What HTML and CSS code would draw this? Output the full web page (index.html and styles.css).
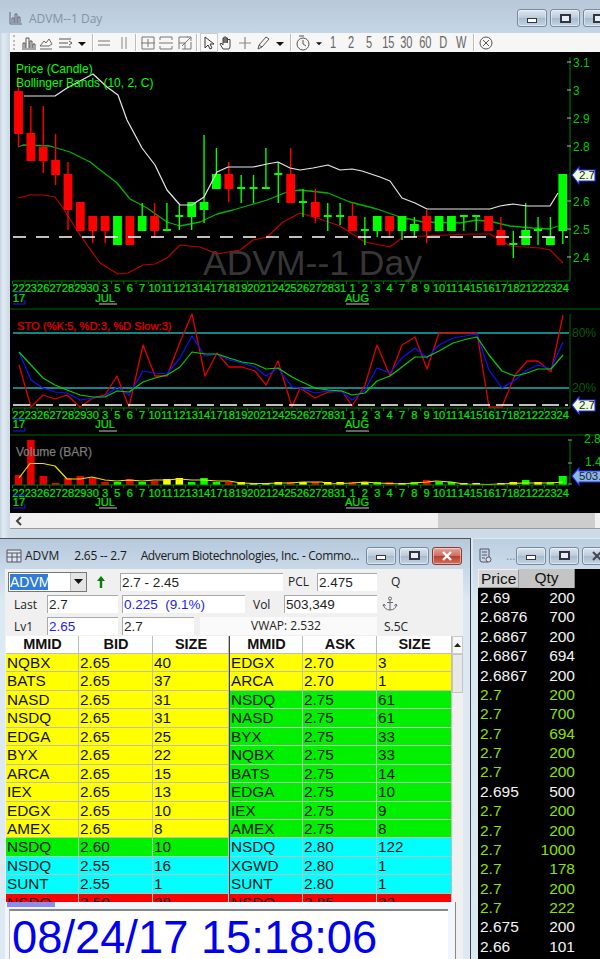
FILE: index.html
```html
<!DOCTYPE html>
<html lang="en">
<head>
<meta charset="utf-8">
<title>ADVM trading windows</title>
<link rel="stylesheet" href="styles.css">
</head>
<body>
<section class="win win-chart">
  <header class="titlebar chart-title">
    <svg class="title-icon" width="14" height="14" viewBox="0 0 14 14"><path d="M1 1v12h12M3 12V7h2v5M6 12V3h2v9M9 12V6h2v6" fill="none" stroke="#667" stroke-width="1"/></svg>
    <span class="dim">ADVM--1 Day</span>
    <div class="wbtns">
      <span class="wbtn"><i class="g-min"></i></span>
      <span class="wbtn"><i class="g-max"></i></span>
      <span class="wbtn"><i class="g-max"></i></span>
    </div>
  </header>
  <div class="toolbar">
    <span class="grip"></span>
    <svg class="tool" viewBox="0 0 18 18"><path d="M4 14V9h2v5M7 14V4h3v10M11 14V7h2v7M14 14v-4h2v4M3 15h14" fill="none" stroke="#555"/></svg>
    <svg class="tool" viewBox="0 0 18 18"><path d="M3 12l4-5 2 2 3-4 3 5-3 2H5zM3 15h12" fill="none" stroke="#666"/></svg>
    <svg class="tool" viewBox="0 0 18 18"><path d="M3 5h12M3 9h9M3 13h12M13 7l3 2-3 2" fill="none" stroke="#555"/></svg>
    <svg class="drop" viewBox="0 0 16 18"><path d="M4 8h8l-4 4z" fill="#111"/></svg>
    <span class="sep"></span>
    <svg class="tool" viewBox="0 0 18 18"><path d="M2 7h12M2 11h12" fill="none" stroke="#777" stroke-width="1.2"/></svg>
    <svg class="tool" viewBox="0 0 18 18"><path d="M7 3v12M11 3v12" fill="none" stroke="#999" stroke-width="1.2"/></svg>
    <span class="sep"></span>
    <svg class="tool" viewBox="0 0 18 18"><path d="M3 6V3h12v3M3 12v3h12v-3M2 9h14M9 5v8M3 6v6M15 6v6" fill="none" stroke="#777"/></svg>
    <svg class="tool" viewBox="0 0 18 18"><path d="M3 6V3h12v3M3 12v3h12v-3M2 9h14" fill="none" stroke="#777"/></svg>
    <svg class="tool" viewBox="0 0 18 18"><path d="M3 15V3h9M15 8v7H6M6 12l9-9M11 3h4v4M3 9h6v6" fill="none" stroke="#777"/></svg>
    <span class="sep"></span>
    <span class="tool-on"><svg width="14" height="18" viewBox="0 0 14 18"><path d="M3 3v11l3-3 2 4 2-1-2-4h4z" fill="#fff" stroke="#333"/></svg></span>
    <svg class="tool" viewBox="0 0 18 18"><path d="M6 15l-3-5 1-1 2 2V4h1v5-6h2v6-5h1.500v5-3.500H13V13l-1 2z" fill="none" stroke="#444"/></svg>
    <svg class="tool" viewBox="0 0 18 18"><path d="M9 3v12M3 9h12" fill="none" stroke="#888" stroke-width="1.200"/></svg>
    <svg class="tool" viewBox="0 0 18 18"><path d="M4 15l1-4 7-8 3 2-7 8zM5 11l3 2" fill="none" stroke="#555"/></svg>
    <svg class="drop" viewBox="0 0 16 18"><path d="M4 8h8l-4 4z" fill="#111"/></svg>
    <span class="sep"></span>
    <svg class="tool" viewBox="0 0 18 18"><circle cx="9" cy="10" r="6" fill="none" stroke="#555"/><path d="M9 6v4l3 2M5 2h5" fill="none" stroke="#555"/></svg>
    <svg class="drop drop-b" viewBox="0 0 16 18"><path d="M4 8h8l-4 4z" fill="#111"/></svg>
    <span class="per">1</span><span class="per">2</span><span class="per">5</span><span class="per">15</span><span class="per">30</span><span class="per">60</span><span class="per">D</span><span class="per">W</span>
    <span class="sep"></span>
    <svg class="tool" viewBox="0 0 18 18"><circle cx="9" cy="9" r="6" fill="none" stroke="#555"/><path d="M6 6l6 6M12 6l-6 6" fill="none" stroke="#555"/></svg>
  </div>
  <div id="chart" class="chart"></div>
  <div class="hscroll">
    <svg class="chev" width="8" height="10" viewBox="0 0 8 10"><path d="M6 1L2 5l4 4" fill="none" stroke="#444" stroke-width="2"/></svg>
    <span class="hthumb"></span>
  </div>
</section>

<section class="win win-book">
  <header class="titlebar book-title">
    <svg class="title-icon" width="16" height="14" viewBox="0 0 16 14"><path d="M1 1h14v12H1zM1 4h14M6 4v9M11 4v9M1 8h14" fill="#dfe6ee" stroke="#556"/></svg>
    <span class="t1">ADVM</span>
    <span class="t2">2.65 -- 2.7</span>
    <span class="t3">Adverum Biotechnologies, Inc. - Commo...</span>
    <div class="wbtns">
      <span class="wbtn"><i class="g-min"></i></span>
      <span class="wbtn"><i class="g-max"></i></span>
      <span class="wbtn close"><svg width="12" height="10" viewBox="0 0 12 10"><path d="M2 1l8 8M10 1L2 9" stroke="#fff" stroke-width="2.400"/></svg></span>
    </div>
  </header>
  <div class="client">
    <div class="form">
      <div class="form-row first">
        <div class="combo"><span class="combo-sel">ADVM</span><span class="combo-btn"><svg width="9" height="5" viewBox="0 0 9 5"><path d="M0 0h9L4.500 5z" fill="#111"/></svg></span></div>
        <svg class="up" width="12" height="14" viewBox="0 0 12 14"><path d="M6 1l4 5H7.200v7H4.800V6H2z" fill="#0a7a0a"/></svg>
        <span class="field f-range">2.7 - 2.45</span>
        <span class="lab l-pcl">PCL</span>
        <span class="field f-pcl">2.475</span>
        <span class="lab l-q">Q</span>
      </div>
      <div class="form-row">
        <span class="lab l-name">Last</span>
        <span class="field f-a">2.7</span>
        <span class="field f-chg blue">0.225&nbsp; (9.1%)</span>
        <span class="lab l-vol">Vol</span>
        <span class="field f-vol">503,349</span>
        <svg class="anchor" width="16" height="16" viewBox="0 0 16 16"><path d="M8 4v10M5 6.500h6M1.500 9c.5 3 3 5 6.500 5s6-2 6.500-5M1 10l1-2 1.500 2M12.500 10l1.500-2 1 2" fill="none" stroke="#667"/><circle cx="8" cy="2.500" r="1.500" fill="none" stroke="#667"/></svg>
      </div>
      <div class="form-row">
        <span class="lab l-name">Lv1</span>
        <span class="field f-a blue">2.65</span>
        <span class="field f-b">2.7</span>
        <span class="vwap">VWAP: 2.532</span>
        <span class="lab l-s">S.5C</span>
      </div>
    </div>
    <div class="book">
      <div class="side">
        <div class="row head"><span>MMID</span><span>BID</span><span>SIZE</span></div>
        <div class="row y"><span>NQBX</span><span>2.65</span><span>40</span></div>
        <div class="row y"><span>BATS</span><span>2.65</span><span>37</span></div>
        <div class="row y"><span>NASD</span><span>2.65</span><span>31</span></div>
        <div class="row y"><span>NSDQ</span><span>2.65</span><span>31</span></div>
        <div class="row y"><span>EDGA</span><span>2.65</span><span>25</span></div>
        <div class="row y"><span>BYX</span><span>2.65</span><span>22</span></div>
        <div class="row y"><span>ARCA</span><span>2.65</span><span>15</span></div>
        <div class="row y"><span>IEX</span><span>2.65</span><span>13</span></div>
        <div class="row y"><span>EDGX</span><span>2.65</span><span>10</span></div>
        <div class="row y"><span>AMEX</span><span>2.65</span><span>8</span></div>
        <div class="row g"><span>NSDQ</span><span>2.60</span><span>10</span></div>
        <div class="row c"><span>NSDQ</span><span>2.55</span><span>16</span></div>
        <div class="row c"><span>SUNT</span><span>2.55</span><span>1</span></div>
        <div class="row r"><span>NSDQ</span><span>2.50</span><span>28</span></div>
      </div>
      <div class="side side-ask">
        <div class="row head"><span>MMID</span><span>ASK</span><span>SIZE</span></div>
        <div class="row y"><span>EDGX</span><span>2.70</span><span>3</span></div>
        <div class="row y"><span>ARCA</span><span>2.70</span><span>1</span></div>
        <div class="row g"><span>NSDQ</span><span>2.75</span><span>61</span></div>
        <div class="row g"><span>NASD</span><span>2.75</span><span>61</span></div>
        <div class="row g"><span>BYX</span><span>2.75</span><span>33</span></div>
        <div class="row g"><span>NQBX</span><span>2.75</span><span>33</span></div>
        <div class="row g"><span>BATS</span><span>2.75</span><span>14</span></div>
        <div class="row g"><span>EDGA</span><span>2.75</span><span>10</span></div>
        <div class="row g"><span>IEX</span><span>2.75</span><span>9</span></div>
        <div class="row g"><span>AMEX</span><span>2.75</span><span>8</span></div>
        <div class="row c"><span>NSDQ</span><span>2.80</span><span>122</span></div>
        <div class="row c"><span>XGWD</span><span>2.80</span><span>1</span></div>
        <div class="row c"><span>SUNT</span><span>2.80</span><span>1</span></div>
        <div class="row r"><span>NSDQ</span><span>2.85</span><span>33</span></div>
      </div>
      <div class="vscroll">
        <span class="vbtn"><svg width="7" height="4" viewBox="0 0 7 4"><path d="M3.500 0L7 4H0z" fill="#222"/></svg></span>
        <span class="vthumb"></span>
      </div>
    </div>
  </div>
  <div class="clock-panel">
    <span class="clock-tab"></span>
    <div class="clock">08/24/17 15:18:06</div>
  </div>
</section>

<section class="win win-tape">
  <header class="titlebar tape-title">
    <svg class="title-icon" width="16" height="16" viewBox="0 0 16 16"><path d="M3 1h9v10M3 1v11a2 2 0 0 0 2 2h6M5 4h5M5 7h5M5 10h3" fill="none" stroke="#556"/><circle cx="11.500" cy="11.500" r="2.500" fill="#dde" stroke="#556"/></svg>
    <span class="dots">...</span>
    <div class="wbtns">
      <span class="wbtn"><i class="g-min"></i></span>
      <span class="wbtn"><i class="g-max"></i></span>
      <span class="wbtn"><svg width="12" height="10" viewBox="0 0 12 10"><path d="M2 1l8 8M10 1L2 9" stroke="#445" stroke-width="2"/></svg></span>
    </div>
  </header>
  <div class="tape">
    <div class="tape-head"><span class="th-price">Price</span><span class="th-qty">Qty</span></div>
    <div class="tick w"><span>2.69</span><span>200</span></div>
    <div class="tick w"><span>2.6876</span><span>700</span></div>
    <div class="tick w"><span>2.6867</span><span>200</span></div>
    <div class="tick w"><span>2.6867</span><span>694</span></div>
    <div class="tick w"><span>2.6867</span><span>200</span></div>
    <div class="tick l"><span>2.7</span><span>200</span></div>
    <div class="tick l"><span>2.7</span><span>700</span></div>
    <div class="tick l"><span>2.7</span><span>694</span></div>
    <div class="tick l"><span>2.7</span><span>200</span></div>
    <div class="tick l"><span>2.7</span><span>200</span></div>
    <div class="tick w"><span>2.695</span><span>500</span></div>
    <div class="tick l"><span>2.7</span><span>200</span></div>
    <div class="tick l"><span>2.7</span><span>200</span></div>
    <div class="tick l"><span>2.7</span><span>1000</span></div>
    <div class="tick l"><span>2.7</span><span>178</span></div>
    <div class="tick l"><span>2.7</span><span>200</span></div>
    <div class="tick l"><span>2.7</span><span>222</span></div>
    <div class="tick w"><span>2.675</span><span>200</span></div>
    <div class="tick w"><span>2.66</span><span>101</span></div>
  </div>
</section>
<script src="chart.js"></script>
</body>
</html>
```
FILE: styles.css
```css
* { box-sizing: border-box; }
html, body { margin: 0; padding: 0; }
body {
  position: relative;
  width: 600px;
  height: 959px;
  overflow: hidden;
  background: #dbe7f1;
  font-family: "Liberation Sans", Arial, sans-serif;
}
.win { position: absolute; overflow: hidden; }
.win-chart {
  left: 0; top: 0; width: 600px; height: 538px;
  padding-left: 10px;
  background: linear-gradient(90deg, #c3d3e2 0, #e2ebf3 3px, #cddbe8 9px);
}
.win-book {
  left: 0; top: 538px; width: 471px; height: 421px;
  background: linear-gradient(180deg, #b6c9dc 0, #c9d9e9 31px, #dce8f2 60px);
  border-right: 1px solid #3b4650;
  border-top: 1px solid #555;
}
.win-tape {
  left: 473px; top: 539px; width: 127px; height: 420px;
  background: linear-gradient(180deg, #bccfe1 0, #cbdbea 31px, #dce8f2 60px);
}
.titlebar {
  display: flex;
  align-items: center;
  font-family: "Open Sans", "Noto Sans", sans-serif;
  font-size: 12px;
  color: #1a1a1a;
  white-space: nowrap;
}
.title-icon { flex: none; }
.chart-title {
  height: 33px;
  margin-left: -10px;
  padding: 3px 0 0 9px;
  background: linear-gradient(180deg, #b9c8d8 0, #c4d6e7 100%);
}
.book-title { height: 30px; padding: 3px 0 0 6px; }
.tape-title { height: 30px; padding: 3px 0 0 4px; }
.dim { margin-left: 6px; color: #8493a3; }
.t1 { margin-left: 3px; }
.t2 { margin-left: 15px; letter-spacing: -.2px; }
.t3 { margin-left: 14px; letter-spacing: -.36px; }
.dots { margin-left: 13px; color: #8493a3; }
.wbtns { display: flex; gap: 3px; margin-left: auto; flex: none; }
.chart-title .wbtns { margin-right: -13px; }
.book-title .wbtns { margin-right: 8px; }
.tape-title .wbtns { margin-right: -12px; }
.wbtn {
  display: flex;
  align-items: center;
  justify-content: center;
  width: 30px;
  height: 18px;
  border: 1px solid #76899e;
  border-radius: 3px;
  background: linear-gradient(180deg, #dce6ef 0, #bccbdb 48%, #a8bbce 52%, #c4d4e3 100%);
  box-shadow: inset 0 0 0 1px rgba(255,255,255,.45);
}
.wbtn.close {
  border-color: #8a3a30;
  background: linear-gradient(180deg, #e4a59b 0, #cf6f60 48%, #b9402f 52%, #d0705f 100%);
}
.g-min { display: block; width: 10px; height: 5px; margin-top: 4px; border: 1px solid #334; background: #fff; }
.g-max { display: block; width: 11px; height: 9px; border: 2px solid #334; background: #e8eef4; }
.toolbar {
  display: flex;
  align-items: center;
  height: 19px;
  width: 590px;
  padding-left: 2px;
  background: #f6f6f6;
  border-left: 1px solid #fff;
}
.grip { width: 2px; height: 15px; margin-right: 4px; border-left: 2px dotted #bbb; }
.tool { flex: none; width: 18px; height: 18px; margin-right: .4px; }
.drop { flex: none; width: 16px; height: 18px; }
.drop-b { width: 12px; margin-right: -1px; }
.sep { flex: none; width: 2px; height: 17px; margin: 0 2px; background: #bbb; border-right: 1px solid #fff; }
.tool-on {
  display: flex;
  align-items: center;
  justify-content: center;
  flex: none;
  width: 18px;
  height: 19px;
  margin-right: -1px;
  border: 1px solid #ccc;
  background: #fbfbfb;
}
.per {
  flex: none;
  width: 18.400px;
  text-align: center;
  font-size: 17px;
  line-height: 18px;
  color: #666;
  transform: scaleX(.65);
}
.chart { height: 461px; background: #000; }
.chart svg { display: block; }
.hscroll {
  position: relative;
  display: flex;
  align-items: center;
  height: 15px;
  background: #f0f0f0;
  box-shadow: 0 1px 0 #999;
}
.chev { margin-left: 5px; }
.hthumb { position: absolute; left: 428px; top: 0; width: 157px; height: 15px; background: #cdcdcd; }
.client {
  height: 390px;
  margin: 0 7px 0 5px;
  background: #f0f0f0;
  overflow: hidden;
}
.form { display: flex; flex-direction: column; gap: 4px; height: 67px; padding-top: 4px; }
.form-row { display: flex; align-items: center; height: 18px; }
.form-row.first { margin-top: -1px; height: 19px; }
.field {
  display: block;
  flex: none;
  height: 18px;
  padding-left: 1px;
  background: #fff;
  border-top: 1px solid #a9a9a9;
  border-left: 1px solid #a9a9a9;
  font-size: 13.500px;
  line-height: 17px;
  color: #222;
}
.blue { color: #2222ee; }
.lab { flex: none; font-family: "Open Sans", "Noto Sans", sans-serif; font-size: 12px; color: #222; }
.combo {
  display: flex;
  flex: none;
  width: 79px;
  height: 20px;
  margin-left: 3px;
  background: #fff;
  border: 1px solid #777;
  font-size: 14px;
}
.combo-sel { width: 38px; height: 16px; margin: 1px; background: #2f7bd6; color: #fff; line-height: 16px; }
.combo-btn {
  display: flex;
  align-items: center;
  justify-content: center;
  width: 16px;
  height: 18px;
  margin-left: auto;
  background: #e4e4e4;
  border-left: 1px solid #bbb;
}
.up { flex: none; margin-left: 8px; }
.f-range { width: 163px; margin-left: 13px; }
.l-pcl { width: 29px; margin-left: 5px; }
.f-pcl { width: 60px; }
.l-q { margin-left: 14px; }
.l-name { width: 33px; margin-left: 9px; }
.f-a { width: 71px; }
.f-chg { width: 123px; margin-left: 4px; }
.l-vol { width: 31px; margin-left: 8px; }
.f-vol { width: 93px; }
.anchor { flex: none; margin-left: 5px; }
.f-b { width: 72px; margin-left: 4px; }
.vwap {
  flex: none;
  width: 177px;
  height: 18px;
  margin-left: 6px;
  padding-left: 51px;
  background: #fafafa;
  font-family: "Open Sans", "Noto Sans", sans-serif;
  font-size: 12px;
  line-height: 18px;
  color: #222;
}
.l-s { margin-left: 7px; }
.book { display: flex; margin-left: 1px; }
.side { flex: none; width: 223px; }
.side-ask { border-left: 1px solid #444; }
.row {
  display: grid;
  grid-template-columns: 73px 74px 76px;
  height: 18.450px;
  font-size: 15.300px;
  line-height: 17px;
  color: #111;
}
.side-ask .row { grid-template-columns: 73px 74px 75px; }
.row span {
  padding-left: 1px;
  border-right: 1px solid #bdbdbd;
  border-bottom: 1px solid #bdbdbd;
  overflow: hidden;
}
.row.head {
  height: 18px;
  background: #fff;
  font-weight: 700;
  font-size: 14.500px;
  text-align: center;
}
.row.y { background: #ffff00; }
.row.g { background: #00f000; }
.row.c { background: #00ffff; }
.row.r { background: #ff0000; }
.vscroll { display: flex; flex-direction: column; flex: none; width: 11px; background: #f0f0f0; }
.vbtn { display: flex; align-items: center; justify-content: center; height: 18px; background: #f8f8f8; border: 1px solid #ccc; }
.vthumb { height: 39px; background: #e8e8e8; border: 1px solid #c4c4c4; }
.clock-panel {
  position: absolute;
  left: 5px;
  top: 363px;
  width: 451px;
  height: 58px;
  padding: 7px 7px 0 4px;
  background: #f1f6fa;
  border-right: 1px solid #888;
}
.clock-tab { position: absolute; left: 2px; top: 0; width: 48px; height: 5px; background: #8c8cee; }
.clock {
  height: 60px;
  padding-left: 2px;
  background: #fff;
  border-top: 2px solid #888;
  border-left: 1px solid #bbb;
  font-size: 45.300px;
  line-height: 53px;
  color: #0000ee;
  white-space: nowrap;
}
.tape { height: 390px; margin-left: 5px; background: #000; }
.tape-head { display: flex; height: 19px; font-size: 15.500px; line-height: 18px; color: #111; }
.th-price { width: 41px; padding-left: 2px; background: #d4d4d4; border: 1px solid #999; border-top-color: #eee; border-left-color: #eee; }
.th-qty { width: 56px; text-align: center; background: #c4c4c4; border-right: 1px solid #888; }
.tick {
  display: flex;
  justify-content: space-between;
  width: 97px;
  height: 19.390px;
  padding: 1px 0 0 2px;
  font-size: 15.500px;
  line-height: 18px;
}
.tick.w { color: #f4f4f4; }
.tick.l { color: #8ee000; }
```
FILE: chart.js
```js
(function () {
  var NS = 'http://www.w3.org/2000/svg';
  var svg = document.createElementNS(NS, 'svg');
  svg.setAttribute('width', 590);
  svg.setAttribute('height', 461);
  svg.setAttribute('viewBox', '10 52 590 461');
  document.getElementById('chart').appendChild(svg);

  function el(name, attrs, text) {
    var n = document.createElementNS(NS, name);
    for (var k in attrs) n.setAttribute(k, attrs[k]);
    if (text !== undefined) n.textContent = text;
    svg.appendChild(n);
    return n;
  }
  function line(x1, y1, x2, y2, c, w, dash) {
    var a = { x1: x1, y1: y1, x2: x2, y2: y2, stroke: c, 'stroke-width': w || 1 };
    if (dash) a['stroke-dasharray'] = dash;
    return el('line', a);
  }
  function poly(pts, c, w) {
    var s = [];
    for (var i = 0; i < pts.length; i += 2) s.push(pts[i] + ',' + pts[i + 1]);
    el('polyline', { points: s.join(' '), fill: 'none', stroke: c, 'stroke-width': w || 1.2, 'stroke-linejoin': 'round' });
  }
  function text(x, y, s, c, size, anchor, thick) {
    var a = { x: x, y: y, fill: c, 'font-size': size, 'font-family': '"Liberation Sans", Arial, sans-serif' };
    if (anchor) a['text-anchor'] = anchor;
    if (thick) { a.stroke = c; a['stroke-width'] = thick; }
    return el('text', a, s);
  }
  function X(i) { return 18.5 + 12.37 * i; }

  var dates = [22,23,26,27,28,29,30,3,5,6,7,10,11,12,13,14,17,18,19,20,21,24,25,26,27,28,31,1,2,3,4,7,8,9,10,11,14,15,16,17,18,21,22,23,24];
  var GREEN = '#00e800', RED = '#ff0000', YEL = '#ffff00', DS = 11.1, TH = 0.2;

  function dateAxis(yLine, yLabel, ySub, yUnder, yBlue) {
    line(13, yLine, 570, yLine, '#007a00');
    dates.forEach(function (d, i) {
      line(X(i) - 6, yLine, X(i) - 6, yLine + 3, '#007a00');
      text(X(i), yLabel, d, GREEN, DS, 'middle', TH);
    });
    line(13, yBlue, 25, yBlue, '#1a1aff');
    text(19, ySub, '17', GREEN, DS, 'middle', TH);
    line(13, yUnder, 25, yUnder, '#1a1aff');
    line(25, yUnder - 4, 25, yUnder, '#1a1aff');
    text(X(7), ySub, 'JUL', GREEN, DS, 'middle', TH);
    line(99, yUnder, 117, yUnder, '#c8c8c8');
    text(357, ySub, 'AUG', GREEN, DS, 'middle', TH);
    line(346, yUnder, 369, yUnder, '#c8c8c8');
  }
  function tag(y, label, fill, tc, right) {
    el('path', { d: 'M572 ' + y + 'l7 -8v3H' + right + 'v11H579v3z', fill: fill, stroke: '#2a2aff', 'stroke-width': 1.1 });
    text(579, y + 4, label, tc, 11.5);
  }

  /* ---------- price pane ---------- */
  text(203, 275, 'ADVM--1 Day', '#363636', 35.500);

  var upper = [24,96,55,96,67,88,93,74,107,87,118,95,127,120,142,148,155,165,167,190,180,205,192,205,204,197,217,172,228,167,241,167,253,167,267,164,278,162,290,168,300,170,313,168,328,165,340,170,352,169,362,171,380,177,390,181,402,198,415,203,427,209,490,209,500,206,513,204,527,206,550,206,558,193];
  var mid = [18,147,23,145,50,146,70,152,90,162,117,183,130,199,147,208,167,222,180,226,200,222,217,214,233,210,250,205,267,200,287,192,300,190,328,193,350,202,377,209,400,217,423,222,460,223,477,220,493,222,510,226,533,228,550,229,558,226];
  var lower = [18,198,30,195,43,195,55,197,63,208,80,235,100,263,118,274,128,273,143,265,155,264,167,258,180,245,200,247,217,254,240,250,253,240,267,237,283,222,300,213,317,218,340,226,365,242,390,247,403,237,423,236,470,234,490,234,510,246,540,248,550,250,563,263];

  var candles = [
    [77,91,134,147,'R'],[106,133,161,161,'R'],[106,147,161,173,'R'],[134,160,175,185,'R'],[162,174,210,230,'R'],
    [202,202,231,231,'R'],[216,216,231,243,'R'],[216,216,231,243,'R'],[216,216,245,245,'G'],[216,216,245,245,'R'],
    [203,216,231,231,'G'],[203,216,231,237,'R'],[203,230,230,230,'G'],[205,216,216,230,'G'],[202,202,217,230,'G'],
    [135,202,210,223,'G'],[148,174,189,189,'G'],[162,174,189,202,'R'],[175,188,188,203,'G'],[175,188,188,203,'G'],
    [148,188,188,188,'G'],[162,174,174,203,'G'],[148,174,203,203,'R'],[189,202,202,217,'G'],[189,202,217,223,'R'],
    [203,216,216,231,'G'],[203,216,216,225,'G'],[203,216,231,231,'R'],[217,230,230,245,'G'],[216,216,231,237,'G'],
    [216,216,231,237,'R'],[216,216,231,240,'G'],[217,224,231,237,'G'],[210,216,231,243,'R'],[216,216,231,231,'G'],
    [216,216,231,231,'G'],[216,216,216,231,'G'],[216,216,216,231,'G'],[216,216,231,231,'R'],[217,230,245,245,'R'],
    [231,244,244,258,'G'],[203,230,245,245,'G'],[217,230,230,245,'G'],[217,237,245,245,'G'],[174,174,231,244,'G']
  ];
  poly(lower, '#c00000', 1.2);
  poly(mid, '#00b400', 1.3);
  candles.forEach(function (c, i) {
    var col = c[4] === 'R' ? RED : '#00ff00';
    var x = X(i);
    line(x, c[0], x, c[3], col, 1.4);
    if (c[1] === c[2]) line(x - 4, c[1], x + 4, c[1], col, 2);
    else el('rect', { x: x - 4.4, y: c[1], width: 8.8, height: c[2] - c[1], fill: col });
  });
  poly(upper, '#e8e8e8', 1.2);
  line(13, 237, 568, 237, '#ffffff', 1.4, '13 10');

  line(570, 57, 570, 281, '#008000');
  [[3.1,62],[3,90],[2.9,118],[2.8,146],[2.6,201],[2.5,229],[2.4,257]].forEach(function (t) {
    line(567, t[1], 571, t[1], '#bbbbbb');
    text(573, t[1] + 4.5, String(t[0]), '#00cc00', 12);
  });
  dateAxis(281, 292, 302, 304, 292);
  tag(175, '2.7', '#eaffd8', '#222', 595);
  text(16, 73, 'Price (Candle)', '#00ff00', 12);
  text(16, 87, 'Bollinger Bands (10, 2, C)', '#00ff00', 12);

  line(10, 309, 600, 309, '#006400');

  /* ---------- stochastic pane ---------- */
  line(13, 333, 569, 333, '#17b3b3', 1.5);
  line(13, 388, 569, 388, '#17b3b3', 1.5);
  var k = [19,365,31,407,43,395,55,399,67,395,80,407,93,398,105,395,117,376,129,407,143,345,155,376,167,376,180,342,192,314,205,376,217,353,229,367,242,367,255,371,266,385,278,361,292,407,300,388,315,398,328,392,342,391,352,406,365,385,377,345,390,376,402,345,415,337,427,369,439,333,477,333,489,407,502,407,515,375,527,361,538,361,551,372,563,315];
  var d = [19,352,31,380,43,388,55,392,67,393,80,400,93,398,105,396,117,387,129,395,143,371,155,373,167,374,180,358,192,336,205,356,217,354,229,360,242,363,255,367,266,376,278,368,292,387,300,388,315,393,328,391,342,392,352,400,365,390,377,368,390,373,402,358,415,348,427,358,439,345,453,338,477,334,489,370,502,388,515,380,527,370,538,365,551,369,563,342];
  var s = [19,352,31,365,43,378,55,385,67,390,80,395,93,397,105,397,117,391,129,392,143,382,155,378,167,375,180,367,192,352,205,354,217,354,229,358,242,362,255,364,266,369,278,368,292,377,300,381,315,388,328,390,342,391,352,395,365,393,377,381,390,376,402,367,415,357,427,357,439,351,453,343,467,339,477,337,489,355,502,371,515,376,527,373,538,369,551,369,563,355];
  poly(k, '#e00000', 1.3);
  poly(d, '#1010ff', 1.2);
  poly(s, '#00d000', 1.2);
  line(13, 405, 568, 405, '#ffffff', 1.4, '17 6');
  line(570, 314, 570, 408, '#006a00');
  text(572, 337, '80%', '#0a5a0a', 12);
  text(572, 392, '20%', '#0a5a0a', 12);
  dateAxis(408, 419, 428, 431, 419);
  tag(405, '2.7', '#eaffd8', '#222', 595);
  text(17, 330, 'STO (%K:5, %D:3, %D Slow:3)', '#e00000', 11.200, '', 0.25);

  line(10, 435, 600, 435, '#006400');

  /* ---------- volume pane ---------- */
  var vols = [[475,'R'],[440,'R'],[476,'R'],[483,'R'],[478,'R'],[476,'R'],[478,'R'],[482,'R'],[482,'G'],[479,'R'],[482,'G'],[481,'R'],[479,'Y'],[478,'Y'],[482,'G'],[478,'G'],[482,'G'],[482,'R'],[482,'Y'],[483,'Y'],[483,'Y'],[482,'Y'],[482,'R'],[482,'Y'],[482,'R'],[482,'Y'],[482,'Y'],[482,'R'],[482,'Y'],[482,'G'],[482,'R'],[483,'Y'],[482,'G'],[480,'R'],[482,'G'],[482,'G'],[483,'Y'],[483,'Y'],[484,'Y'],[483,'Y'],[482,'Y'],[480,'G'],[482,'Y'],[482,'G'],[476,'G']];
  vols.forEach(function (v, i) {
    var col = v[1] === 'R' ? '#e80000' : v[1] === 'G' ? '#00ff00' : YEL;
    var w = i === 44 ? 8 : 7.5;
    el('rect', { x: X(i) - w / 2, y: v[0], width: w, height: 485 - v[0], fill: col });
  });
  poly([19,478,30,463.5,43,463.5,55,466,67,479,80,479,92,477,105,480,117,481,129,480,142,481,154,480,166,480,179,479,192,480,204,480,217,481,229,481,241,483,254,483.5,266,483.5,278,483,290,483,303,482,322,482,328,484,352,483,365,482,377,483,402,484,414,483,427,482,436,481,451,482,464,484,488,484.5,500,484,525,483,550,483,563,482], '#f0e000', 1.2);
  line(570, 440, 570, 484, '#007a00');
  [440, 463, 484].forEach(function (y) { line(568, y, 572, y, '#999'); });
  text(584, 443, '2.8', '#00cc00', 12);
  text(585, 466, '1.4', '#00cc00', 12);
  dateAxis(485, 497, 506, 508, 495);
  tag(476, '503.3', '#88b8ea', '#222', 606);
  text(16, 456, 'Volume (BAR)', '#7c7c7c', 12, '', 0.25);
})();
```
